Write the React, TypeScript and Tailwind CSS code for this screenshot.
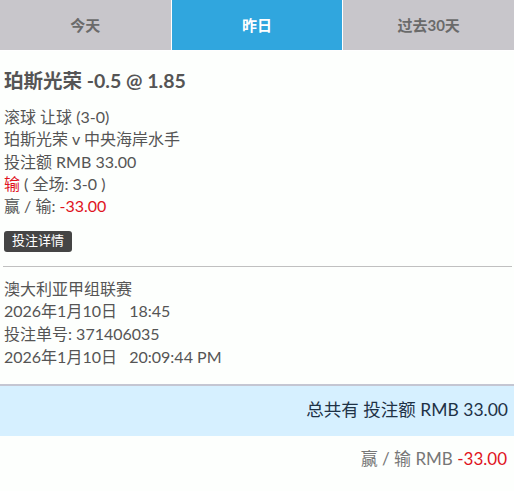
import React from 'react';

const tabs = ['今天', '昨日', '过去30天'];

export default function App() {
  const font = { fontFamily: 'Lato, "Noto Sans CJK SC", sans-serif' };
  return (
    <div className="min-h-[491px] w-[514px] bg-[#fdfffd] text-[#555] overflow-hidden" style={font}>
      {/* Tabs */}
      <div className="grid grid-cols-3 gap-px bg-white h-[51px] pb-px">
        {tabs.map((t, i) => (
          <div
            key={t}
            className={
              'flex items-center justify-center text-[15px] font-bold ' +
              (i === 1 ? 'bg-[#30a6de] text-white' : 'bg-[#c8c6cb] text-[#6a6a6a]')
            }
          >
            {t}
          </div>
        ))}
      </div>

      {/* Bet */}
      <div className="px-[4px] pt-[16px]">
        <div className="text-[19.5px] font-bold leading-[28px] text-[#555]">珀斯光荣 -0.5 @ 1.85</div>
        <div className="mt-[11px] text-[16px] leading-[22.3px]">
          <div>滚球 让球 (3-0)</div>
          <div>珀斯光荣 v 中央海岸水手</div>
          <div>投注额 RMB 33.00</div>
          <div>
            <span className="text-[#e0141e]">输</span> ( 全场: 3-0 )
          </div>
          <div>
            赢 / 输: <span className="text-[#e0141e]">-33.00</span>
          </div>
        </div>
        <div className="mt-[10px]">
          <span className="inline-flex items-center h-[21px] px-[8px] rounded-[3px] bg-[#454545] text-white text-[13px]">
            投注详情
          </span>
        </div>
      </div>

      <div className="mt-[14px] ml-[3px] mr-[2px] h-px bg-[#c0c0c0]" />

      <div className="px-[4px] pt-[11px] text-[16px] leading-[22.7px]">
        <div>澳大利亚甲组联赛</div>
        <div>2026年1月10日&nbsp;&nbsp;&nbsp;18:45</div>
        <div>投注单号: 371406035</div>
        <div>2026年1月10日&nbsp;&nbsp;&nbsp;20:09:44 PM</div>
      </div>

      {/* Summary */}
      <div className="mt-[15px] border-t-2 border-[#c4c6d2] bg-[#d6f0ff] h-[52px] flex items-center justify-end pr-[6px] text-[17.5px] text-[#1e3246]">
        总共有 投注额 RMB 33.00
      </div>
      <div className="h-[46px] flex items-center justify-end pr-[7px] text-[17px] text-[#777]">
        赢 / 输 RMB&nbsp;<span className="text-[#e0141e]">-33.00</span>
      </div>
    </div>
  );
}
